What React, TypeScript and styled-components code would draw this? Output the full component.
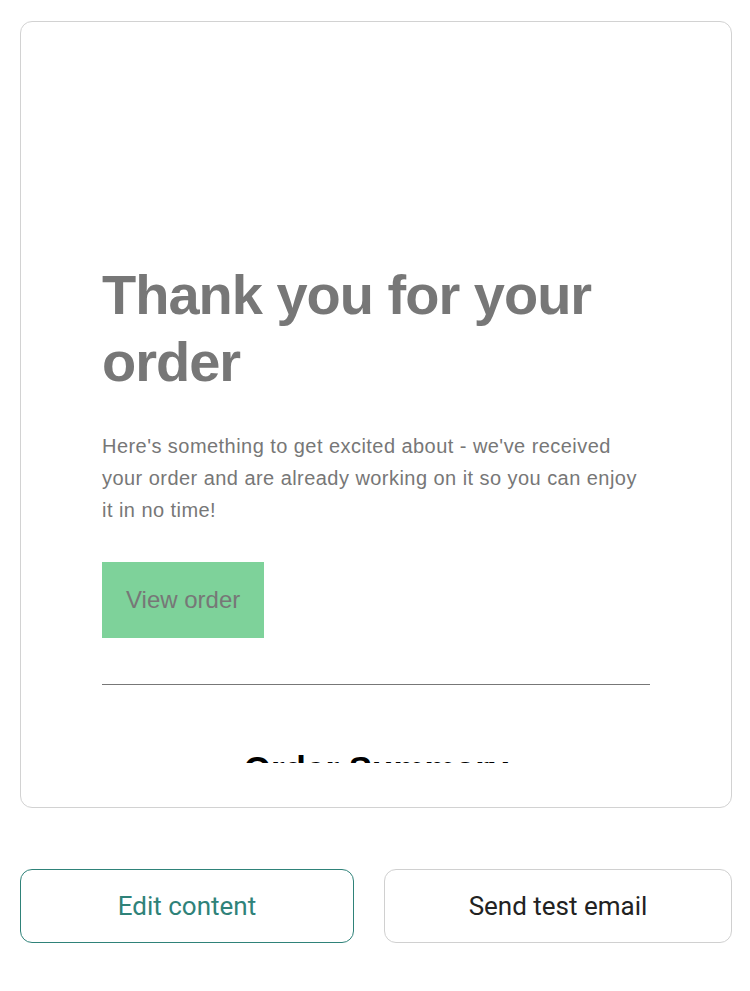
import React from 'react'
import styled, { createGlobalStyle } from 'styled-components'

const GlobalStyle = createGlobalStyle`
  html, body {
    margin: 0;
    padding: 0;
    background: #ffffff;
  }
  * {
    box-sizing: border-box;
  }
`

const Page = styled.div`
  padding: 21px 18px 0 20px;
  display: flex;
  flex-direction: column;
  gap: 61px;
`

const PreviewCard = styled.div`
  border: 1px solid #d2d2d2;
  border-radius: 12px;
  padding-bottom: 44px;
  background: #fff;
`

const Viewport = styled.div`
  height: 741px;
  overflow: hidden;
`

const EmailBody = styled.div`
  padding: 239px 81px 0 81px;
  font-family: Arial, 'Liberation Sans', sans-serif;
  color: #777777;
`

const Heading = styled.h1`
  margin: 0;
  font-size: 56px;
  line-height: 1.2;
  font-weight: 700;
  letter-spacing: -1px;
  color: #777777;
`

const Lead = styled.p`
  margin: 35px 0 0 0;
  font-size: 20px;
  line-height: 32px;
  letter-spacing: 0.45px;
`

const CtaButton = styled.a`
  display: inline-block;
  margin-top: 36px;
  padding: 24px 24px;
  font-size: 24px;
  line-height: 28px;
  background: #7ed29a;
  color: #777777;
  text-decoration: none;
`

const Divider = styled.hr`
  margin: 46px 0 0 0;
  border: none;
  border-top: 1px solid #777777;
`

const SectionTitle = styled.h2`
  margin: 64px 0 0 0;
  text-align: center;
  font-size: 35px;
  line-height: 1.15;
  font-weight: 700;
  color: #000;
`

const Actions = styled.div`
  display: grid;
  grid-template-columns: 334fr 348fr;
  gap: 30px;
`

const ActionButton = styled.button<{ $primary?: boolean }>`
  height: 74px;
  border-radius: 12px;
  background: #fff;
  border: 1px solid ${p => (p.$primary ? '#2f8279' : '#d0d0d0')};
  color: ${p => (p.$primary ? '#2f8279' : '#222222')};
  font-family: Roboto, 'Noto Sans', sans-serif;
  font-size: 26px;
  font-weight: 400;
  cursor: pointer;
`

export default function App() {
  return (
    <>
      <GlobalStyle />
      <Page>
        <PreviewCard>
          <Viewport>
            <EmailBody>
              <Heading>Thank you for your order</Heading>
              <Lead>
                Here's something to get excited about - we've received your order and are already working on it so you can enjoy it in no time!
              </Lead>
              <CtaButton href="#">View order</CtaButton>
              <Divider />
              <SectionTitle>Order Summary</SectionTitle>
            </EmailBody>
          </Viewport>
        </PreviewCard>
        <Actions>
          <ActionButton $primary>Edit content</ActionButton>
          <ActionButton>Send test email</ActionButton>
        </Actions>
      </Page>
    </>
  )
}
